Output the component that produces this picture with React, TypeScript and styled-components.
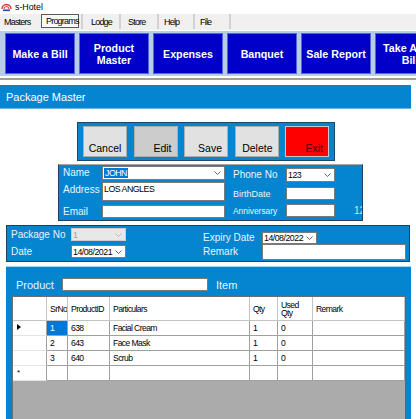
import React from "react";
import styled, { createGlobalStyle } from "styled-components";

const SANS = `"Liberation Sans", Arial, sans-serif`;
const BLUE = "#0585d0";
const LABEL = "#eaf4fb";

const GlobalStyle = createGlobalStyle`
  html, body {
    margin: 0;
    padding: 0;
    background: #fff;
  }
  body {
    width: 416px;
    height: 419px;
    overflow: hidden;
    font-family: ${SANS};
    color: #000;
  }
`;

const TitleBar = styled.div`
  height: 14px;
  display: flex;
  align-items: center;
  gap: 3px;
  padding-left: 1px;
  font-size: 8.8px;
`;

const MenuBar = styled.div`
  height: 16px;
  background: #f0f0f0;
  display: flex;
  align-items: flex-start;
`;

const Tab = styled.div<{ $w: number; $active?: boolean; $pl?: number }>`
  width: ${(p) => p.$w}px;
  height: ${(p) => (p.$active ? 14 : 15)}px;
  box-sizing: border-box;
  display: flex;
  align-items: center;
  padding-left: ${(p) => p.$pl ?? 7}px;
  font-size: 9px;
  letter-spacing: -0.8px;
  white-space: nowrap;
  margin-left: ${(p) => (p.$active ? 3 : 0)}px;
  margin-right: ${(p) => (p.$active ? 2 : 0)}px;
  border: ${(p) => (p.$active ? "1px solid #5a5a5a" : "none")};
  background: ${(p) => (p.$active ? "#f9f9f9" : "transparent")};
`;

const TabSep = styled.div`
  width: 2px;
  height: 15px;
  background: #d2d2d2;
`;

const Toolbar = styled.div`
  margin-top: 1px;
  height: 45px;
  box-sizing: border-box;
  padding: 2px 5px;
  display: flex;
  gap: 4px;
  background: #b9cde4;
  overflow: hidden;
`;

const ToolButton = styled.div`
  flex: 0 0 70px;
  height: 41px;
  box-sizing: border-box;
  background: #0000c8;
  border: 1px solid #5566dd;
  color: #fff;
  font-weight: bold;
  font-size: 10.7px;
  line-height: 12px;
  display: flex;
  align-items: center;
  justify-content: center;
  text-align: center;
  white-space: pre;
`;

const Rule = styled.div`
  height: 2px;
  background: #a0a0a0;
  margin: 2px 0 5px;
`;

const Main = styled.div`
  width: 411px;
`;

const Header = styled.div`
  height: 24px;
  box-sizing: border-box;
  background: ${BLUE};
  border-bottom: 1px solid #6ab4e4;
  color: #fff;
  font-size: 11px;
  padding-left: 6px;
  display: flex;
  align-items: center;
`;

const ActionPanel = styled.div`
  margin: 13px 0 0 77px;
  width: 258px;
  height: 39px;
  box-sizing: border-box;
  border: 1px solid #1f4868;
  background: ${BLUE};
  padding: 0 5px;
  display: flex;
  align-items: center;
  justify-content: space-between;
`;

const ActionButton = styled.div<{ $tone?: "edit" | "exit"; $center?: boolean }>`
  width: 44px;
  height: 31px;
  box-sizing: border-box;
  background: ${(p) => (p.$tone === "edit" ? "#cccccc" : p.$tone === "exit" ? "#ff0000" : "#e1e1e1")};
  border: 1px solid ${(p) => (p.$tone === "exit" ? "#c8c8c8" : "#adadad")};
  color: ${(p) => (p.$tone === "exit" ? "#3a0000" : "#000")};
  font-size: 10.5px;
  line-height: 12px;
  display: flex;
  align-items: flex-end;
  justify-content: ${(p) => (p.$center ? "center" : "flex-end")};
  padding: 0 5px 2px;
`;

const Group = styled.div<{ $ml: number; $mt: number; $w: number; $h: number }>`
  margin: ${(p) => p.$mt}px 0 0 ${(p) => p.$ml}px;
  width: ${(p) => p.$w}px;
  height: ${(p) => p.$h}px;
  box-sizing: border-box;
  background: ${BLUE};
  border: 1px solid #22405c;
  display: flex;
  overflow: hidden;
`;

const CustomerGroup = styled(Group)`
  border-top-color: #a8a8a8;
`;

const Column = styled.div<{ $ml: number }>`
  display: flex;
  flex-direction: column;
  margin-left: ${(p) => p.$ml}px;
  flex-shrink: 0;
`;

const Field = styled.div<{ $mt: number; $top?: boolean }>`
  display: flex;
  align-items: ${(p) => (p.$top ? "flex-start" : "center")};
  margin-top: ${(p) => p.$mt}px;
`;

const Label = styled.span<{ $w: number; $size?: number; $pt?: number }>`
  width: ${(p) => p.$w}px;
  flex-shrink: 0;
  font-size: ${(p) => p.$size ?? 10}px;
  line-height: 12px;
  padding-top: ${(p) => p.$pt ?? 0}px;
  color: ${LABEL};
  white-space: nowrap;
`;

const Box = styled.div<{ $w: number; $h: number; $disabled?: boolean; $top?: boolean }>`
  width: ${(p) => p.$w}px;
  height: ${(p) => p.$h}px;
  box-sizing: border-box;
  background: ${(p) => (p.$disabled ? "#e8e8e8" : "#fff")};
  border: 1px solid ${(p) => (p.$disabled ? "#cccccc" : "#7a7a7a")};
  color: ${(p) => (p.$disabled ? "#a0a0a0" : "#000")};
  font-size: 8.8px;
  letter-spacing: -0.5px;
  padding: ${(p) => (p.$top ? "1px" : "0")} 3px 0 1px;
  display: flex;
  align-items: ${(p) => (p.$top ? "flex-start" : "center")};
  justify-content: space-between;
  white-space: nowrap;
  overflow: hidden;
`;

const Selected = styled.span`
  background: #0078d7;
  color: #fff;
  padding: 0 1px;
`;

const Clipped = styled.span`
  margin-left: 19px;
  font-size: 10px;
  color: #cfe3f3;
`;

const ProductPanel = styled.div`
  margin: 4px 0 0 6px;
  width: 405px;
  height: 153px;
  box-sizing: border-box;
  background: ${BLUE};
  border-top: 1px solid #a9d3ee;
  padding: 0 6px;
  overflow: hidden;
`;

const ProductRow = styled.div`
  display: flex;
  align-items: center;
  margin-top: 11px;
`;

const BigLabel = styled.span<{ $w?: number; $ml?: number }>`
  width: ${(p) => (p.$w ? `${p.$w}px` : "auto")};
  margin-left: ${(p) => p.$ml ?? 0}px;
  padding-left: 4px;
  box-sizing: border-box;
  font-size: 11px;
  color: #e8f4fc;
`;

const GridArea = styled.div`
  margin-top: 5px;
  height: 140px;
  background: #ababab;
  border-top: 1px solid #6d6d6d;
  border-left: 1px solid #6d6d6d;
`;

const Table = styled.table`
  width: 392px;
  table-layout: fixed;
  border-collapse: separate;
  border-spacing: 0;
  background: #fff;
  font-size: 8.6px;
  letter-spacing: -0.6px;
`;

const Col = styled.col<{ $w: number }>`
  width: ${(p) => p.$w}px;
`;

const HeadRow = styled.tr`
  height: 24px;
`;

const BodyRow = styled.tr`
  height: 15px;
`;

const Th = styled.th<{ $two?: boolean }>`
  font-weight: normal;
  text-align: left;
  padding: 0 0 0 3px;
  line-height: ${(p) => (p.$two ? "8px" : "10px")};
  border-right: 1px solid #c4c4c4;
  border-bottom: 1px solid #c4c4c4;
  white-space: pre;
  overflow: hidden;
  vertical-align: middle;
`;

const Td = styled.td<{ $sel?: boolean }>`
  padding: 0 0 0 3px;
  line-height: 10px;
  border-right: 1px solid #a0a0a0;
  border-bottom: 1px solid #a0a0a0;
  background: ${(p) => (p.$sel ? "#0078d7" : "#fff")};
  color: ${(p) => (p.$sel ? "#fff" : "#000")};
  white-space: nowrap;
  overflow: hidden;
`;

const RowHead = styled.td`
  padding: 0 0 0 4px;
  line-height: 10px;
  border-right: 1px solid #a0a0a0;
  border-bottom: 1px solid #e4e4e4;
  font-size: 8px;
`;

const Chevron = ({ color = "#555" }: { color?: string }) => (
  <svg width="7" height="4" viewBox="0 0 7 4">
    <polyline points="0.5,0.5 3.5,3.5 6.5,0.5" fill="none" stroke={color} strokeWidth="0.9" />
  </svg>
);

const Logo = () => (
  <svg width="11" height="9" viewBox="0 0 11 9">
    <path d="M1 6 A4.5 4.5 0 0 1 10 6" fill="none" stroke="#e0302a" strokeWidth="1.4" />
    <path d="M3 6 A2.5 2.5 0 0 1 8 6" fill="none" stroke="#e0302a" strokeWidth="1" />
    <rect x="2" y="6.5" width="7" height="1.6" fill="#2a3fb0" />
  </svg>
);

const Arrow = () => (
  <svg width="4" height="6" viewBox="0 0 4 6">
    <polygon points="0,0 4,3 0,6" fill="#000" />
  </svg>
);

const tools = ["Make a Bill", "Product\nMaster", "Expenses", "Banquet", "Sale Report", "Take Away\nBill"];

const rows = [
  { sr: "1", id: "638", name: "Facial Cream", qty: "1", used: "0" },
  { sr: "2", id: "643", name: "Face Mask", qty: "1", used: "0" },
  { sr: "3", id: "640", name: "Scrub", qty: "1", used: "0" },
];

export default function App() {
  return (
    <>
      <GlobalStyle />
      <TitleBar>
        <Logo />
        <span>s-Hotel</span>
      </TitleBar>

      <MenuBar>
        <Tab $w={38} $pl={4}>Masters</Tab>
        <Tab $w={38} $pl={4} $active>Programs</Tab>
        <TabSep />
        <Tab $w={36} $pl={8}>Lodge</Tab>
        <TabSep />
        <Tab $w={36}>Store</Tab>
        <TabSep />
        <Tab $w={34} $pl={5}>Help</Tab>
        <TabSep />
        <Tab $w={34} $pl={5}>File</Tab>
        <TabSep />
      </MenuBar>

      <Toolbar>
        {tools.map((t) => (
          <ToolButton key={t}>{t}</ToolButton>
        ))}
      </Toolbar>
      <Rule />

      <Main>
        <Header>Package Master</Header>

        <ActionPanel>
          <ActionButton $center>Cancel</ActionButton>
          <ActionButton $tone="edit">Edit</ActionButton>
          <ActionButton>Save</ActionButton>
          <ActionButton>Delete</ActionButton>
          <ActionButton $tone="exit">Exit</ActionButton>
        </ActionPanel>

        <CustomerGroup $ml={58} $mt={3} $w={305} $h={57}>
          <Column $ml={4}>
            <Field $mt={1}>
              <Label $w={39}>Name</Label>
              <Box $w={123} $h={14}>
                <Selected>JOHN</Selected>
                <Chevron />
              </Box>
            </Field>
            <Field $mt={2} $top>
              <Label $w={39} $pt={2}>Address</Label>
              <Box $w={123} $h={19} $top>LOS ANGLES</Box>
            </Field>
            <Field $mt={4}>
              <Label $w={39}>Email</Label>
              <Box $w={123} $h={13} />
            </Field>
          </Column>
          <Column $ml={8}>
            <Field $mt={3}>
              <Label $w={53}>Phone No</Label>
              <Box $w={49} $h={14}>
                123
                <Chevron />
              </Box>
            </Field>
            <Field $mt={5}>
              <Label $w={53} $size={9}>BirthDate</Label>
              <Box $w={49} $h={13} />
            </Field>
            <Field $mt={4}>
              <Label $w={53} $size={8.4}>Anniversary</Label>
              <Box $w={49} $h={13} />
              <Clipped>12</Clipped>
            </Field>
          </Column>
        </CustomerGroup>

        <Group $ml={6} $mt={4} $w={404} $h={37}>
          <Column $ml={4}>
            <Field $mt={2}>
              <Label $w={60}>Package No</Label>
              <Box $w={55} $h={13} $disabled>
                1
                <Chevron color="#b0b0b0" />
              </Box>
            </Field>
            <Field $mt={4}>
              <Label $w={60}>Date</Label>
              <Box $w={55} $h={13}>
                14/08/2021
                <Chevron />
              </Box>
            </Field>
          </Column>
          <Column $ml={77}>
            <Field $mt={6}>
              <Label $w={59}>Expiry Date</Label>
              <Box $w={55} $h={12}>
                14/08/2022
                <Chevron />
              </Box>
            </Field>
            <Field $mt={0}>
              <Label $w={59}>Remark</Label>
              <Box $w={144} $h={16} />
            </Field>
          </Column>
        </Group>

        <ProductPanel>
          <ProductRow>
            <BigLabel $w={50}>Product</BigLabel>
            <Box $w={146} $h={13} />
            <BigLabel $ml={4}>Item</BigLabel>
          </ProductRow>
          <GridArea>
            <Table>
              <colgroup>
                <Col $w={34} />
                <Col $w={21} />
                <Col $w={42} />
                <Col $w={140} />
                <Col $w={28} />
                <Col $w={35} />
                <Col $w={92} />
              </colgroup>
              <thead>
                <HeadRow>
                  <Th />
                  <Th>SrNo</Th>
                  <Th>ProductID</Th>
                  <Th>Particulars</Th>
                  <Th>Qty</Th>
                  <Th $two>{"Used\nQty"}</Th>
                  <Th>Remark</Th>
                </HeadRow>
              </thead>
              <tbody>
                {rows.map((r, i) => (
                  <BodyRow key={r.sr}>
                    <RowHead>{i === 0 ? <Arrow /> : null}</RowHead>
                    <Td $sel={i === 0}>{r.sr}</Td>
                    <Td>{r.id}</Td>
                    <Td>{r.name}</Td>
                    <Td>{r.qty}</Td>
                    <Td>{r.used}</Td>
                    <Td />
                  </BodyRow>
                ))}
                <BodyRow>
                  <RowHead>*</RowHead>
                  <Td />
                  <Td />
                  <Td />
                  <Td />
                  <Td />
                  <Td />
                </BodyRow>
              </tbody>
            </Table>
          </GridArea>
        </ProductPanel>
      </Main>
    </>
  );
}
